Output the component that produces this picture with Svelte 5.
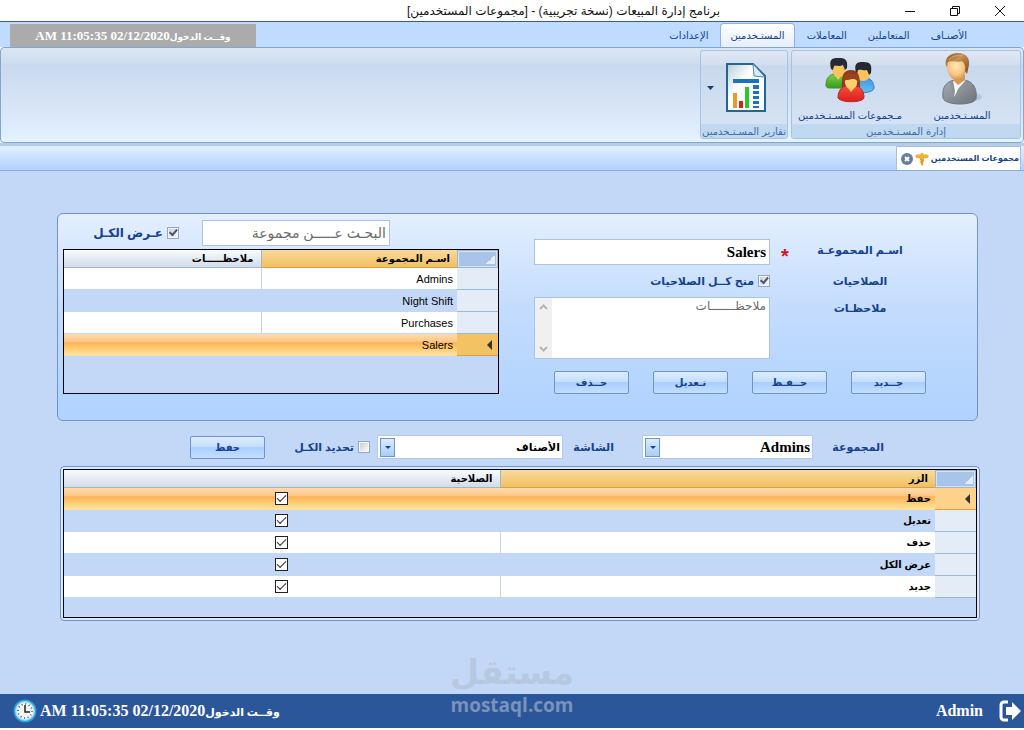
<script>
  const tabs = ['الأصنـاف', 'المتعاملين', 'المعاملات', 'المستـخدمين', 'الإعدادات'];
  let activeTab = $state('المستـخدمين');

  const groups = ['Admins', 'Night Shift', 'Purchases', 'Salers'];
  let currentGroup = $state('Salers');

  let permissions = $state([
    { name: 'حفظ', allowed: true },
    { name: 'تعديل', allowed: true },
    { name: 'حذف', allowed: true },
    { name: 'عرض الكل', allowed: true },
    { name: 'جديد', allowed: true }
  ]);
  let currentPermission = $state('حفظ');

  const actions = ['جــديد', 'حــفـظ', 'تـعديل', 'حــذف'];
  const loginTime = '02/12/2020 11:05:35 AM';
</script>

<div class="window" dir="rtl" lang="ar">
  <header class="titlebar">
    <div class="controls">
      <button aria-label="إغلاق"><svg width="12" height="12" viewBox="0 0 12 12"><path d="M1 1l10 10M11 1L1 11" /></svg></button>
      <button aria-label="استعادة"><svg width="12" height="12" viewBox="0 0 12 12"><path d="M1.5 3.5h7v7h-7zM3.5 3.500V1.500h7v7H8.500" /></svg></button>
      <button aria-label="تصغير"><svg width="12" height="12" viewBox="0 0 12 12"><path d="M1 6.500h10" /></svg></button>
    </div>
    <h1>برنامج إدارة المبيعات (نسخة تجريبية) - [مجموعات المستخدمين]</h1>
  </header>

  <nav class="tabs">
    {#each tabs as tab}
      <button class:active={tab === activeTab} onclick={() => (activeTab = tab)}>{tab}</button>
    {/each}
    <div class="login"><small>وقــت الدخول</small>{loginTime}</div>
  </nav>

  <section class="ribbon">
    <div class="group manage">
      <div class="items">
        <button class="tool users">
          <svg width="50" height="52" viewBox="0 0 50 52">
            <defs>
              <radialGradient id="skin" cx=".45" cy=".4" r=".65"><stop offset="0" stop-color="#ffe7b5" /><stop offset=".6" stop-color="#f6c682" /><stop offset="1" stop-color="#cf8844" /></radialGradient>
              <linearGradient id="hair" x1="0" y1="0" x2="1" y2="1"><stop offset="0" stop-color="#8a4f1e" /><stop offset=".4" stop-color="#c9905a" /><stop offset="1" stop-color="#7d4718" /></linearGradient>
              <linearGradient id="suit" x1="0" y1="0" x2="1" y2="1"><stop offset="0" stop-color="#a9adb3" /><stop offset="1" stop-color="#6c7178" /></linearGradient>
            </defs>
            <ellipse cx="36" cy="44" rx="9" ry="4" fill="#8fa6c4" opacity=".4" />
            <path d="M6 45c-1-8 1-14 8-17l9-2 8 2c7 3 9 10 8 18-1 3-8 5-16 5S7 49 6 45z" fill="url(#suit)" stroke="#70767e" />
            <path d="M16 28l1 16 12-16-6-3z" fill="#f8fafc" />
            <path d="M16 28l-3 2 4 15 1-7zM29 27l3 3-3 5-12 10 4-9z" fill="#8d9299" />
            <path d="M17 22h11v5l-7 5-4-4z" fill="#d9964f" />
            <path d="M10 11c0-6 5-8 11-8 6 0 9 4 9 10-1 9-6 14-10 14-7 0-10-8-10-16z" fill="url(#skin)" />
            <path d="M9 13C7 5 13 0 21 0c8 0 12 5 11 12l-2 9-2-3c1-4 0-7-3-10-4 2-10-1-14 1l-1 5z" fill="url(#hair)" />
            <path d="M12 7c3-4 8-5 14-4" fill="none" stroke="#dba978" />
          </svg>
          <span>المسـتـخدمين</span>
        </button>
        <button class="tool people">
          <svg width="50" height="48" viewBox="0 0 50 48">
            <defs>
              <linearGradient id="green" x1="0" y1="0" x2="0" y2="1"><stop offset="0" stop-color="#7ed04a" /><stop offset="1" stop-color="#3a9a1e" /></linearGradient>
              <linearGradient id="blue" x1="0" y1="0" x2="0" y2="1"><stop offset="0" stop-color="#3f97e0" /><stop offset="1" stop-color="#6bbcf2" /></linearGradient>
              <linearGradient id="red" x1="0" y1="0" x2="0" y2="1"><stop offset="0" stop-color="#f4503c" /><stop offset="1" stop-color="#d81f1e" /></linearGradient>
            </defs>
            <path d="M1 29c0-7 4-11 9-11h6c6 0 9 4 9 9v5H5c-3 0-4-1-4-3z" fill="url(#green)" stroke="#3b9a22" />
            <path d="M9 18l4 6 5-6z" fill="#f9c45c" />
            <path d="M7 10h14c1 7-2 11-7 11s-8-5-7-11z" fill="#f9c45c" />
            <path d="M6 13C4 4 6 2 13 2s10 1 9 10l-2 2-2-5c-4 2-7 0-9 1l-1 4z" fill="#252a33" />
            <path d="M29 35c0-9 2-13 7-13h5c5 0 8 5 8 10 0 4-11 6-20 4z" fill="url(#blue)" stroke="#2a80c8" />
            <path d="M31 14h14c1 7-2 11-7 11s-8-5-7-11z" fill="#fbc45b" />
            <path d="M31 17C29 8 31 6 38 6c8 0 9 3 8 11l-2 2-2-5c-4 1-6-1-9 0l-1 4z" fill="#242830" />
            <path d="M17 31c-1-12 2-17 9-17s9 5 9 17z" fill="#8d3b1c" />
            <path d="M13 42c0-8 4-12 10-12h6c6 0 10 4 10 12-2 5-23 5-26 0z" fill="url(#red)" stroke="#c52320" />
            <path d="M21 29l5 7 6-7z" fill="#fbc96b" />
            <path d="M20 23h12c1 6-2 10-6 10s-7-4-6-10z" fill="#ffcf70" />
            <path d="M18 26c0-7 3-9 8-9s9 2 8 9l-3-2-3-2c-3 2-5 2-7 2z" fill="#9b431d" />
          </svg>
          <span>مـجموعات المسـتـخدمين</span>
        </button>
      </div>
      <div class="caption">إدارة المسـتـخدمين</div>
    </div>
    <div class="group reports">
      <div class="items">
        <button class="tool report" aria-label="تقارير">
          <svg width="40" height="49" viewBox="0 0 40 49">
            <defs><linearGradient id="sheet" x1="0" y1="0" x2="1" y2="1"><stop offset="0" stop-color="#b4cddd" /><stop offset=".4" stop-color="#fff" /><stop offset="1" stop-color="#f5fafd" /></linearGradient></defs>
            <path d="M1 1h26l12 12v35H1z" fill="url(#sheet)" stroke="#27668c" stroke-width="2" />
            <path d="M27 1l1 12 11 1z" fill="#dcebf4" stroke="#4f87a8" />
            <path d="M7 16h26v4H7zM27 22h6v4h-6zM27 28h6v3h-6zM27 33h6v3h-6zM27 38h6v3h-6zM27 43h6v2h-6z" fill="#1d72bd" />
            <path d="M7 30h4v15H7z" fill="#e99a27" /><path d="M13 38h4v7h-4z" fill="#d42222" /><path d="M19 24h4v21h-4z" fill="#2cc52b" />
          </svg>
          <svg width="7" height="4" viewBox="0 0 7 4"><path d="M0 0h7L3.500 4z" fill="#1e3c72" /></svg>
        </button>
      </div>
      <div class="caption">تقارير المسـتـخدمين</div>
    </div>
  </section>

  <div class="docs">
    <div class="doc">
      <strong>مجموعات المستخدمين</strong>
      <svg width="14" height="14" viewBox="0 0 14 14"><path d="M0 4c2-2 4-2 5-1a2 2 0 1 1 4 0c1-1 3-1 5 1-1 2-3 3-5 2l-1 7-1 1-1-1-1-7C3 7 1 6 0 4z" fill="#eeb130" /><path d="M5 7c4 1 4 2 1 4M9 8c-4 1-4 2-1 4" stroke="#d89214" fill="none" /></svg>
      <button aria-label="إغلاق التبويب"><svg width="12" height="12" viewBox="0 0 12 12"><circle cx="6" cy="6" r="6" fill="#6b7b9c" /><path d="M4 4l4 4M8 4L4 8" stroke="#fff" stroke-width="2" /></svg></button>
    </div>
  </div>

  <main>
    <section class="panel">
      <form class="form" onsubmit={(e) => e.preventDefault()}>
        <div class="fields">
          <label for="name">اسـم المحموعـة</label>
          <span class="star">*</span>
          <input id="name" class="box serif" value="Salers" />
          <span class="label">الصلاحيات</span>
          <span></span>
          <label class="check"><input type="checkbox" checked />منح كــل الصلاحيات</label>
          <label for="notes">ملاحظـات</label>
          <span></span>
          <div class="area">
            <textarea id="notes" class="box" placeholder="ملاحظـــــــات"></textarea>
            <div class="scroll">
              <svg width="9" height="6" viewBox="0 0 9 6"><path d="M1 5l3.500-3.500L8 5" /></svg>
              <svg width="9" height="6" viewBox="0 0 9 6"><path d="M1 1l3.500 3.500L8 1" /></svg>
            </div>
          </div>
        </div>
        <div class="actions">
          {#each actions as action}<button class="btn">{action}</button>{/each}
        </div>
      </form>

      <div class="lookup">
        <div class="search">
          <input class="box" aria-label="البحث عن مجموعة" placeholder="البحـث عـــــن مجموعة" />
          <label class="check"><input type="checkbox" checked />عـرض الكـل</label>
        </div>
        <div class="frame short">
          <table>
            <colgroup><col class="mark" /><col /><col /></colgroup>
            <thead><tr><th class="corner"></th><th class="sorted">اسـم المجموعة</th><th>ملاحظـــــات</th></tr></thead>
            <tbody>
              {#each groups as group}
                <tr class:current={group === currentGroup} onclick={() => (currentGroup = group)}>
                  <td class="mark">{#if group === currentGroup}<i></i>{/if}</td>
                  <td class="latin">{group}</td>
                  <td></td>
                </tr>
              {/each}
            </tbody>
          </table>
        </div>
      </div>
    </section>

    <section class="filters">
      <label class="group-label" for="group">المجموعة</label>
      <div class="combo group-box">
        <select id="group" class="serif"><option>Admins</option><option>Salers</option></select>
        <span class="arrow"></span>
      </div>
      <label class="screen-label" for="screen">الشاشة</label>
      <div class="combo screen-box">
        <select id="screen"><option>الأصناف</option><option>المتعاملين</option></select>
        <span class="arrow"></span>
      </div>
      <label class="check all"><input type="checkbox" />تحديد الكـل</label>
      <button class="btn">حفظ</button>
    </section>

    <section class="outer">
      <div class="frame tall">
        <table>
          <colgroup><col class="mark" /><col /><col /></colgroup>
          <thead><tr><th class="corner"></th><th class="sorted">الزر</th><th>الصلاحية</th></tr></thead>
          <tbody>
            {#each permissions as permission}
              <tr class:current={permission.name === currentPermission} onclick={() => (currentPermission = permission.name)}>
                <td class="mark">{#if permission.name === currentPermission}<i></i>{/if}</td>
                <td>{permission.name}</td>
                <td class="tick"><input type="checkbox" aria-label={permission.name} bind:checked={permission.allowed} /></td>
              </tr>
            {/each}
          </tbody>
        </table>
      </div>
    </section>
  </main>

  <footer>
    <button aria-label="خروج">
      <svg width="22" height="22" viewBox="0 0 22 22"><path d="M9 2H5a3 3 0 0 0-3 3v12a3 3 0 0 0 3 3h4" fill="none" stroke="#fff" stroke-width="3" /><path d="M7 7h6V2l9 9-9 9v-5H7z" fill="#fff" /></svg>
    </button>
    <span class="user">Admin</span>
    <span class="stamp"><small>وقــت الدخول</small>{loginTime}</span>
    <svg width="24" height="24" viewBox="0 0 24 24">
      <circle cx="12" cy="12" r="11.500" fill="#2f9fd8" /><circle cx="12" cy="12" r="10" fill="#9fdcf6" /><circle cx="12" cy="12" r="8.500" fill="#f2f5f7" />
      <circle cx="12" cy="12" r="7" fill="none" stroke="#444" stroke-width="1.500" stroke-dasharray="1 2.660" />
      <path d="M12 6v7h5" fill="none" stroke="#222" stroke-width="1.500" />
    </svg>
    <div class="watermark"><b>مستقل</b><span dir="ltr">mostaql.com</span></div>
  </footer>
</div>

<style>
  :global(body) { margin: 0; background: #fff; }
  .window {
    min-height: 100vh;
    box-sizing: border-box;
    padding-bottom: 2px;
    display: flex;
    flex-direction: column;
    font-family: "Liberation Sans", "DejaVu Sans", sans-serif;
    font-size: 12px;
    color: #15428b;
  }
  button, input, select, textarea { font: inherit; color: inherit; margin: 0; padding: 0; box-sizing: border-box; }
  button { border: 0; background: none; white-space: nowrap; }
  svg { display: block; flex: none; }

  .titlebar { display: flex; height: 21px; border-bottom: 1px solid #3c5a7c; background: #fff; align-items: center; }
  .controls { display: flex; margin-inline-end: 167px; }
  .controls button { width: 45px; height: 20px; display: grid; place-items: center; }
  .controls button:first-child { margin-inline-start: 2px; }
  .controls path { fill: none; stroke: #111; }
  h1 { margin: 0; font-size: 12px; line-height: 18px; font-weight: 400; color: #111; white-space: nowrap; }

  .tabs { display: flex; height: 25px; background: #bfdbff; padding: 0 48px 0 10px; align-items: flex-end; }
  .tabs button { padding: 0 8px; height: 24px; margin-inline-end: 3px; font-size: 10px; border: 1px solid transparent; border-bottom: 0; border-radius: 4px 4px 0 0; }
  .tabs .active { background: linear-gradient(#fff, #e5eefb); border-color: #8db2e3; padding: 0 9px; }
  .login { margin-inline-start: auto; width: 246px; height: 23px; background: #ababab; color: #fff; text-align: center; font: bold 13px/23px "Liberation Serif", "DejaVu Sans", serif; white-space: nowrap; }
  .login small { font-size: 9px; }

  .ribbon {
    display: flex; gap: 3px; height: 96px; box-sizing: border-box; padding: 2px;
    border: 1px solid #7fa7cf; border-radius: 4px;
    background: linear-gradient(#dbe6f4, #cfdded 16%, #c9d9ed 17%, #d9e7f8 70%, #e3f3ff);
  }
  .group { display: flex; flex-direction: column; height: 89px; box-sizing: border-box; border: 1px solid #a5c3e2; border-radius: 3px; overflow: hidden; background: linear-gradient(#dfe8f4, #d2deee 16%, #c9d8ec 17%, #d8e5f6); }
  .manage { width: 230px; }
  .reports { width: 88px; }
  .items { flex: 1; display: flex; justify-content: center; }
  .caption { background: #c1d8f1; color: #3e6aaa; height: 14px; line-height: 15px; font-size: 10px; text-align: center; white-space: nowrap; }
  .tool { display: flex; flex-direction: column; align-items: center; justify-content: space-between; font-size: 10px; line-height: 16px; padding-top: 2px; }
  .users, .people { width: 112px; }
  .people { padding-top: 5px; }
  .report { flex: 1; flex-direction: row; justify-content: flex-start; gap: 12px; padding: 0 21px 0 0; }
  .docs { display: flex; align-items: flex-end; margin-top: 3px; height: 25px; box-sizing: border-box; background: linear-gradient(#e3efff, #b0d2ff); border-bottom: 1px solid #8dacd2; padding-inline-start: 3px; box-shadow: 0 -3px #b5cce8; }
  .doc { display: flex; align-items: center; gap: 2px; height: 24px; box-sizing: border-box; padding: 0 1px 0 4px; background: #fff; border: 1px solid #a3bfe3; border-bottom: 0; white-space: nowrap; }
  .doc strong { font-size: 8px; }

  main { flex: 1; background: #c3d8f7; padding: 42px 44px 0 57px; }
  .panel {
    display: flex; height: 208px; box-sizing: border-box; margin-right: 2px; padding-left: 5px; gap: 35px;
    border: 1px solid #6f94c9; border-radius: 6px; background: linear-gradient(#e3efff, #c4dcfd 45%, #afd2ff);
  }
  .form { flex: none; padding-top: 25px; font-weight: bold; }
  .fields { display: grid; grid-template-columns: 120px 30px 236px; grid-template-rows: 26px 32px 62px; padding-inline-start: 57px; text-align: center; font-size: 11px; line-height: 22px; }
  .star { color: #d9141e; font-size: 20px; line-height: 34px; }
  .label { line-height: 32px; }
  .box { border: 1px solid #a9c4e6; border-radius: 0; background: #fff; color: #000; width: 100%; height: 26px; padding: 0 3px; font-size: 12px; outline: 0; }
  .box::placeholder { color: #6b6b6b; opacity: 1; font-weight: 400; }
  .serif, .box.serif { font-family: "Liberation Serif", "DejaVu Sans", serif; font-size: 15px; font-weight: bold; }
  .check { display: flex; align-items: center; gap: 4px; white-space: nowrap; }
  .check input { appearance: none; width: 12px; height: 12px; border: 1px solid #9aa7b8; background: linear-gradient(135deg, #c3c9d2, #fff); box-shadow: inset 0 0 0 1px #f4f7fa; flex: none; display: grid; place-items: center; }
  .check input:checked::after { content: ""; width: 3px; height: 6px; border: solid #46587c; border-width: 0 2px 2px 0; transform: rotate(40deg) translate(-1px, -1px); }
  .area { display: flex; position: relative; }
  .area textarea { height: 62px; resize: none; line-height: 17px; }
  .scroll { position: absolute; left: 1px; top: 1px; bottom: 1px; width: 17px; background: #f0f0f0; display: flex; flex-direction: column; justify-content: space-between; align-items: center; padding: 6px 0; box-sizing: border-box; }
  .scroll path { fill: none; stroke: #b5b5b5; stroke-width: 2; }
  .actions { display: flex; gap: 24px; padding: 12px 51px 0 0; }
  .btn { width: 75px; height: 23px; border: 1px solid #6f94c9; border-radius: 2px; background: linear-gradient(#dcebff, #c6dffe 45%, #aacffe 50%, #c3deff); font-size: 10px; font-weight: bold; }

  .lookup { flex: 1; min-width: 0; }
  .search { display: flex; align-items: center; gap: 23px; padding: 6px 109px 3px 0; font-weight: bold; }
  .search .box { width: 188px; font-size: 14px; }
  .frame { border: 1px solid #000; box-sizing: border-box; background: #c3d8f7; }
  .short { height: 145px; }
  .tall { height: 149px; }
  table { width: 100%; border-collapse: separate; border-spacing: 0; table-layout: fixed; color: #000; font-size: 10px; }
  col.mark { width: 41px; }
  th { height: 18px; padding: 0 7px; box-sizing: border-box; text-align: start; border-bottom: 1px solid #9eb6ce; border-left: 1px solid #9eb6ce; background: linear-gradient(#f9fcfd, #d3dbe9); }
  th:last-child { border-left: 0; }
  .sorted { background: linear-gradient(#f9d99f, #f1c15f); border-bottom-color: #e39c3f; }
  .corner { background: linear-gradient(135deg, transparent 50%, #e4ecf7 50%) right 2px top 4px / 9px 9px no-repeat, #a9c4e9; border: 1px solid #9eb6ce; box-shadow: inset 0 0 0 1px #d5e3f5; }
  td { height: 22px; padding: 0 4px; box-sizing: border-box; border-left: 1px solid #c8d4e4; border-bottom: 1px solid #c3d8f7; font-weight: bold; background: #fff; }
  td:last-child { border-left: 0; }
  td.mark { padding-inline-start: 6px; }
  tr:nth-child(even) td { background: #c3d8f7; border-color: #c3d8f7; }
  tr td.mark, tr:nth-child(even) td.mark { background: #e4ecf7; border-bottom: 1px solid #9eb6ce; border-left: 0; }
  td.latin { font-size: 11px; font-weight: 400; }
  tr.current td, tr.current:nth-child(even) td { background: linear-gradient(#ffdcb0, #fdc888 35%, #fdb35a 42%, #fdd079 75%, #ffe59b); border-color: transparent; }
  tr.current td.mark, tr.current:nth-child(even) td.mark { background: #f3c263; border-bottom-color: #e39c3f; }
  .tall tr.current td.mark { background: #ffd28c; }
  .mark i { display: block; width: 0; height: 0; border: solid transparent; border-width: 5px 5px 5px 0; border-right-color: #333; }
  .tick { text-align: center; line-height: 0; }
  .tick input { appearance: none; width: 13px; height: 13px; border: 1px solid #222; background: #fff; vertical-align: middle; display: inline-grid; place-items: center; }
  .tick input:checked::after { content: ""; width: 4px; height: 8px; border: solid #333; border-width: 0 1px 1px 0; transform: rotate(45deg) translate(-1px, -1px); }

  .filters { display: flex; align-items: center; height: 24px; margin-top: 14px; padding-inline-start: 96px; font-weight: bold; font-size: 11px; white-space: nowrap; }
  .group-label { width: 71px; }
  .screen-label { width: 51px; margin-inline-start: 28px; }
  .combo { position: relative; }
  .group-box { width: 171px; }
  .screen-box { width: 186px; }
  .combo select { appearance: none; width: 100%; height: 24px; border: 1px solid #b3cbea; border-radius: 0; background: #fff; color: #000; padding: 0 2px; display: block; }
  .arrow { position: absolute; left: 3px; top: 3px; width: 15px; height: 19px; box-sizing: border-box; border: 1px solid #6f94c9; background: linear-gradient(#dcebff, #a8cdfe); display: grid; place-items: center; pointer-events: none; }
  .arrow::after { content: ""; border: solid transparent; border-width: 3px 3px 0; border-top-color: #15428b; }
  .all { margin-inline-start: 7px; width: 105px; }
  .outer { margin: 7px 0 0 3px; padding: 2px; border: 1px solid #6f94c9; border-radius: 4px; background: #d8e8ff; }

  footer { position: relative; display: flex; align-items: center; height: 34px; background: #2b579a; color: #fff; padding: 0 3px 0 13px; font: bold 16px "Liberation Serif", "DejaVu Sans", serif; white-space: nowrap; }
  .user { margin-inline-start: 16px; }
  .stamp { margin-inline-start: auto; margin-inline-end: 3px; }
  .stamp small { font-size: 11px; }
  .watermark { position: absolute; left: 50%; bottom: 10px; transform: translateX(-50%); display: flex; flex-direction: column; align-items: center; color: rgba(200, 208, 220, .5); font: bold 19px "Open Sans", "DejaVu Sans", sans-serif; pointer-events: none; }
  .watermark b { font: bold 34px "DejaVu Sans", sans-serif; color: rgba(165, 175, 190, .4); }
</style>
